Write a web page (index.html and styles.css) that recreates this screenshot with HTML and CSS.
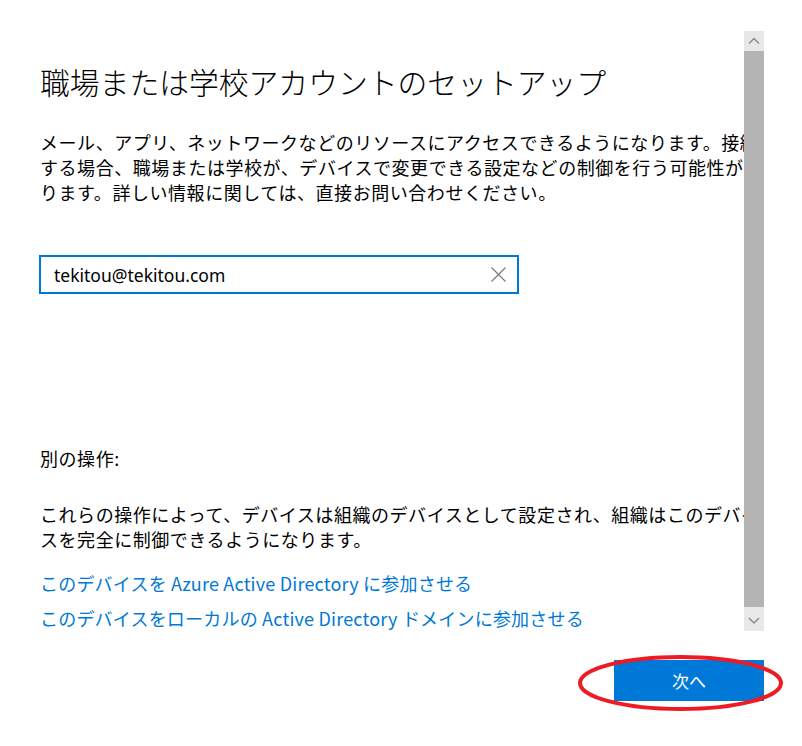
FILE: index.html
```html
<!DOCTYPE html>
<html lang="ja">
<head>
  <meta charset="UTF-8">
  <meta name="viewport" content="width=device-width, initial-scale=1.0">
  <title>職場または学校アカウントのセットアップ</title>
  <link rel="stylesheet" href="styles.css">
</head>
<body>
  <div class="window">
    <div class="main">
      <div class="content">
        <h1 class="title">職場または学校アカウントのセットアップ</h1>
        <p class="text">
          <span class="line">メール、アプリ、ネットワークなどのリソースにアクセスできるようになります。接続</span>
          <span class="line">する場合、職場または学校が、デバイスで変更できる設定などの制御を行う可能性があ</span>
          <span class="line">ります。詳しい情報に関しては、直接お問い合わせください。</span>
        </p>

        <div class="textbox">
          <span class="textbox-value">tekitou@tekitou.com</span>
          <svg class="clear-icon" width="15" height="15" viewBox="0 0 15 15">
            <path d="M0.5 0.5 L14.5 14.5 M14.5 0.5 L0.5 14.5" stroke="#7a7a7a" stroke-width="1.2" fill="none"/>
          </svg>
        </div>

        <p class="label">別の操作:</p>
        <p class="text small">
          <span class="line">これらの操作によって、デバイスは組織のデバイスとして設定され、組織はこのデバイ</span>
          <span class="line">スを完全に制御できるようになります。</span>
        </p>

        <a class="link" href="#">このデバイスを Azure Active Directory に参加させる</a>
        <a class="link" href="#">このデバイスをローカルの Active Directory ドメインに参加させる</a>
      </div>

      <!-- scrollbar -->
      <div class="scrollbar">
        <div class="scroll-arrow up">
          <svg width="20" height="20" viewBox="0 0 20 20">
            <path d="M5 12.5 L10 7.5 L15 12.5" stroke="#8c8c8c" stroke-width="1.5" fill="none"/>
          </svg>
        </div>
        <div class="scroll-thumb"></div>
        <div class="scroll-arrow down">
          <svg width="20" height="24" viewBox="0 0 20 24">
            <path d="M5 11 L10 16 L15 11" stroke="#8c8c8c" stroke-width="1.5" fill="none"/>
          </svg>
        </div>
      </div>
    </div>

    <div class="footer">
      <div class="next-wrap">
        <button class="next-btn">次へ</button>
        <svg class="marker" width="205" height="56" viewBox="0 0 205 56">
          <ellipse cx="102.5" cy="28" rx="100.5" ry="26" stroke="#ed1c24" stroke-width="4" fill="none"/>
        </svg>
      </div>
    </div>
  </div>
</body>
</html>
```

FILE: styles.css
```css
/* Reset */
* {
  margin: 0;
  padding: 0;
  box-sizing: border-box;
}

body {
  font-family: "Noto Sans CJK JP", "Noto Sans", sans-serif;
  background-color: #ffffff;
  color: #000;
}

.window {
  width: 802px;
  height: 746px;
  overflow: hidden;
}

.main {
  display: flex;
  height: 660px;
}

.content {
  width: 744px;
  height: 660px;
  overflow: hidden;
  padding-left: 40px;
  display: flex;
  flex-direction: column;
  align-items: flex-start;
}

.title {
  font-size: 29.8px;
  font-weight: 300;
  line-height: 40px;
  margin-top: 61px;
  white-space: nowrap;
}

.text {
  font-size: 18px;
  line-height: 25px;
  letter-spacing: 0.55px;
  margin-top: 29px;
}

.text .line {
  display: block;
  white-space: nowrap;
}

.textbox {
  width: 480px;
  height: 39px;
  margin-top: 50px;
  margin-left: -1px;
  border: 2px solid #0078d7;
  display: flex;
  align-items: center;
  justify-content: space-between;
  padding-left: 13px;
  padding-right: 11px;
}

.textbox-value {
  font-family: "Noto Sans", sans-serif;
  font-size: 17.5px;
  color: #000;
}

.clear-icon {
  display: block;
}

.label {
  font-size: 18px;
  line-height: 25px;
  letter-spacing: 0.55px;
  margin-top: 152px;
}

.text.small {
  margin-top: 31px;
}

.link {
  font-size: 18px;
  line-height: 25px;
  letter-spacing: 0.2px;
  color: #0078d7;
  text-decoration: none;
  white-space: nowrap;
  margin-top: 19px;
}

.link + .link {
  margin-top: 10px;
}

/* Scrollbar */
.scrollbar {
  width: 20px;
  margin-top: 31px;
  height: 600px;
  display: flex;
  flex-direction: column;
}

.scroll-arrow {
  background-color: #e8e8e8;
}

.scroll-arrow svg {
  display: block;
}

.scroll-arrow.up {
  height: 20px;
}

.scroll-arrow.down {
  height: 24px;
}

.scroll-thumb {
  flex: 1;
  background-color: #b4b4b4;
}

/* Footer */
.footer {
  display: flex;
  justify-content: flex-end;
  padding-right: 38px;
}

.next-wrap {
  position: relative;
}

.next-btn {
  width: 150px;
  height: 41px;
  border: none;
  background-color: #0078d7;
  color: white;
  font-family: "Noto Sans CJK JP", sans-serif;
  font-size: 17px;
}

.marker {
  position: absolute;
  left: -36px;
  top: -5px;
  pointer-events: none;
}
```
